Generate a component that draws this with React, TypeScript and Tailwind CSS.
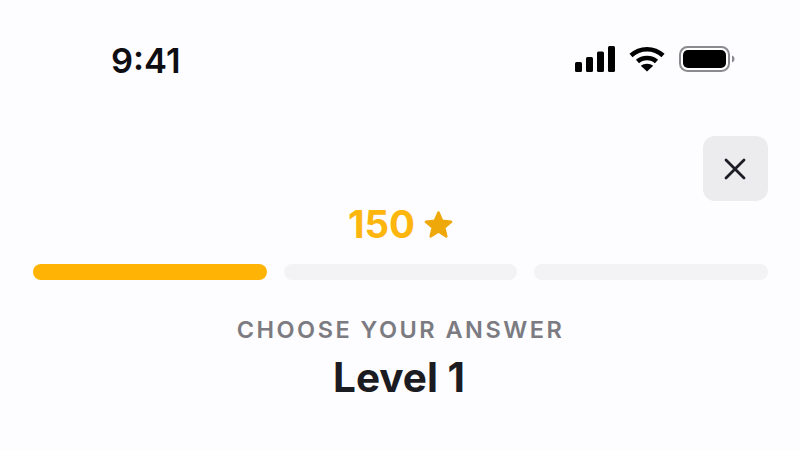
export default function App() {
  return (
    <main className="w-[800px] h-[450px] overflow-hidden bg-[#fdfcfe] font-['Inter',sans-serif] flex flex-col">
      {/* status bar */}
      <div className="h-[136px] shrink-0 pl-[111px] pr-[65px] pt-[40px] flex justify-between items-start">
        <span className="text-[34.5px] leading-[42px] font-semibold text-[#0d0d12]">9:41</span>
        <div className="flex items-center gap-[14px] pt-[6px]">
          <svg width="40" height="26" viewBox="0 0 40 26" fill="#000">
            <rect x="0" y="16" width="7" height="10" rx="1.5" />
            <rect x="11" y="11" width="7" height="15" rx="1.5" />
            <rect x="22" y="5.5" width="7" height="20.5" rx="1.5" />
            <rect x="33" y="0" width="7" height="26" rx="1.5" />
          </svg>
          <svg width="36" height="26" viewBox="0 0 36 26" fill="none" stroke="#000" strokeWidth="4.5">
            <path d="M2 9.5C11 1 25 1 34 9.5" />
            <path d="M8.5 15.5C13.5 10.8 22.5 10.8 27.5 15.5" />
            <path d="M18 25.5L11.8 19.8C15 17 21 17 24.2 19.8Z" fill="#000" stroke="none" />
          </svg>
          <svg width="56" height="26" viewBox="0 0 56 26" fill="none">
            <rect x="1" y="1" width="49" height="24" rx="7.5" stroke="#8b8b8f" strokeWidth="2" />
            <rect x="4" y="4" width="43" height="18" rx="5" fill="#000" />
            <path d="M53 9.5C55 10.5 55.5 11.5 55.5 13C55.5 14.5 55 15.5 53 16.5Z" fill="#8b8b8f" />
          </svg>
        </div>
      </div>

      <div className="pl-[33px] pr-[32px] flex flex-col">
        <div className="flex justify-end">
          <button className="w-[65px] h-[65px] rounded-[12px] bg-[#ececef] flex items-center justify-center pr-[2px]">
            <svg width="24" height="24" viewBox="0 0 24 24" fill="none" stroke="#1c1c24" strokeWidth="2.8" strokeLinecap="round">
              <path d="M3 3L21 21M21 3L3 21" />
            </svg>
          </button>
        </div>

        <div className="mt-[3px] h-[40px] flex items-center justify-center gap-[8px] pl-[1px]">
          <span className="text-[38.5px] leading-[40px] font-bold text-[#fdb60d]">150</span>
          <svg width="31" height="29" viewBox="0 0 24 23" fill="#efa80a" stroke="#efa80a" strokeWidth="2" strokeLinejoin="round">
            <path d="M12 2l2.9 6.6 7.1.7-5.4 4.7 1.6 7L12 17l-6.2 3.9 1.6-7L2 9.3l7.1-.7z" />
          </svg>
        </div>

        <div className="mt-[20px] flex gap-[17px]">
          <div className="h-[16px] flex-1 rounded-full bg-[#ffb405]" />
          <div className="h-[16px] flex-1 rounded-full bg-[#f3f3f5]" />
          <div className="h-[16px] flex-1 rounded-full bg-[#f3f3f5]" />
        </div>

        <p className="mt-[36px] text-center text-[23.5px] leading-[28px] font-semibold tracking-[2.5px] text-[#7b7b81]">
          CHOOSE YOUR ANSWER
        </p>
        <h1 className="mt-[10px] pr-[3px] text-center text-[40.5px] leading-[48px] font-bold text-[#1b1b22]">Level 1</h1>
      </div>
    </main>
  );
}
